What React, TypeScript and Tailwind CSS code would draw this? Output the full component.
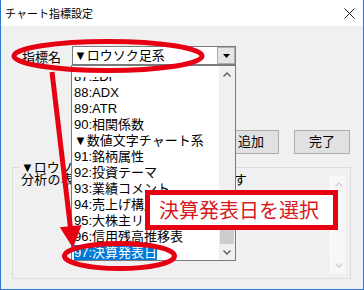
import React from 'react';

const items = [
  '88:ADX',
  '89:ATR',
  '90:相関係数',
  '▼数値文字チャート系',
  '91:銘柄属性',
  '92:投資テーマ',
  '93:業績コメント',
  '94:売上げ構成',
  '95:大株主リスト',
  '96:信用残高推移表',
  '97:決算発表日',
];

const Chevron = ({ up, color }: { up?: boolean; color: string }) => (
  <svg width="8" height="5" viewBox="0 0 8 5">
    <polyline
      points={up ? '0.5,4.5 4,1 7.5,4.5' : '0.5,0.5 4,4 7.5,0.5'}
      fill="none"
      stroke={color}
      strokeWidth="1.4"
    />
  </svg>
);

const App = () => {
  return (
    <div className="relative w-[364px] h-[290px] overflow-hidden bg-[#f0f0f0] border-x border-b border-[#2b78d4] font-['Liberation_Sans','Noto_Sans_CJK_JP',sans-serif] text-black">
      {/* Title bar */}
      <div className="h-[26px] bg-white flex items-center justify-between pl-[4px] pr-[8px]">
        <span className="text-[11px] font-['Noto_Sans_CJK_JP',sans-serif]">チャート指標設定</span>
        <svg width="11" height="11" viewBox="0 0 11 11">
          <path d="M0.5 0.5 L10.5 10.5 M10.5 0.5 L0.5 10.5" stroke="#222" strokeWidth="1" />
        </svg>
      </div>

      {/* Indicator name row */}
      <div className="mt-[20px] flex items-center pl-[21px] h-[19px]">
        <span className="w-[50px] text-[13px] leading-[16px] mt-[5px]">指標名</span>
        <div className="w-[164px] h-[19px] bg-white border border-[#7a7a7a] flex items-center">
          <span className="pl-[1px] text-[13px] leading-[16px]">▼ロウソク足系</span>
          <div className="ml-auto w-[18px] h-[17px] bg-[#e5e5e5] border border-[#adadad] flex items-center justify-center">
            <svg width="7" height="4" viewBox="0 0 7 4">
              <polygon points="0,0 7,0 3.5,4" fill="#000" />
            </svg>
          </div>
        </div>
      </div>

      {/* Buttons */}
      <div className="mt-[65px] flex justify-end gap-[15px] pr-[13px]">
        <button className="w-[56px] h-[24px] bg-[#e1e1e1] border border-[#adadad] text-[13px] leading-[16px]">追加</button>
        <button className="w-[56px] h-[24px] bg-[#e1e1e1] border border-[#adadad] text-[13px] leading-[16px]">完了</button>
      </div>

      {/* Group box */}
      <fieldset className="mt-[7px] ml-[11px] mr-[12px] h-[118px] border border-[#dcdcdc]">
        <legend className="ml-[7px] px-[1px] text-[13px] leading-[13px]">▼ロウソク足系</legend>
        <div className="flex items-start">
          <div className="flex-1 -mt-[2px] pl-[8px] text-[13px] leading-[16px] tracking-[0.3px] whitespace-nowrap overflow-hidden">
            分析の表示に使うチャートを選びます
          </div>
          <div className="mt-[2px] mr-[4px] w-[16px] h-[98px] bg-[#f7f7f7] border-l border-[#fdfdfd] flex flex-col justify-between items-center py-[6px]">
            <Chevron up color="#cfcfcf" />
            <Chevron color="#cfcfcf" />
          </div>
        </div>
      </fieldset>

      {/* Open dropdown list */}
      <div className="absolute left-[70px] top-[65px] w-[165px] h-[196px] bg-white border border-[#7a7a7a] flex">
        <div className="flex-1 overflow-hidden pl-[2px] text-[13px] leading-[16px]">
          {/* partly scrolled-out first row */}
          <div className="mt-[11px] h-[8px] overflow-hidden">
            <div className="-mt-[8px] h-[16px] whitespace-nowrap">87:±DI</div>
          </div>
          {items.map((it) => (
            <div key={it} className="h-[16px] whitespace-nowrap">
              {it === '97:決算発表日' ? (
                <span className="inline-block h-[16px] bg-[#0078d7] text-white">{it}</span>
              ) : (
                it
              )}
            </div>
          ))}
        </div>
        <div className="w-[16px] bg-[#f0f0f0] flex flex-col">
          <div className="h-[17px] flex items-center justify-center">
            <Chevron up color="#606060" />
          </div>
          <div className="flex-1 flex flex-col justify-end px-[1px]">
            <div className="h-[16px] bg-[#cdcdcd]" />
          </div>
          <div className="h-[16px] flex items-center justify-center">
            <Chevron color="#606060" />
          </div>
        </div>
      </div>

      {/* Callout box */}
      <div className="absolute left-[144px] top-[190px] w-[193px] h-[40px] bg-white border-[5px] border-[#e60012] flex items-center pl-[9px]">
        <span className="text-[20px] leading-[24px] text-[#d71920] font-['Noto_Sans_CJK_JP',sans-serif]">決算発表日を選択</span>
      </div>

      {/* Red annotations */}
      <svg className="absolute left-[-1px] top-0 pointer-events-none" width="364" height="290" viewBox="0 0 364 290">
        <ellipse cx="108" cy="56" rx="94" ry="14.5" fill="none" stroke="#e60012" strokeWidth="5" />
        <ellipse cx="119.5" cy="256" rx="55" ry="12.5" fill="none" stroke="#e60012" strokeWidth="5" />
        <line x1="52" y1="72" x2="70.5" y2="228" stroke="#e60012" strokeWidth="5" />
        <polygon points="59.8,227.3 81.6,224.9 73,248" fill="#e60012" />
      </svg>
    </div>
  );
};

export default App;
